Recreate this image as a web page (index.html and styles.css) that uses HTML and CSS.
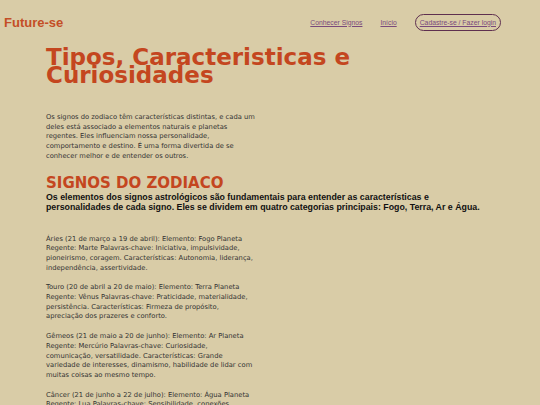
FILE: index.html
```html
<!DOCTYPE html>
<html lang="pt-BR">
<head>
<meta charset="utf-8">
<title>Future-se</title>
<link rel="stylesheet" href="styles.css">
</head>
<body>
<header class="topbar">
  <div class="brand">Future-se</div>
  <nav class="nav">
    <a href="#" class="nav-link">Conhecer Signos</a>
    <a href="#" class="nav-link">Início</a>
    <a href="#" class="nav-link nav-btn">Cadastre-se / Fazer login</a>
  </nav>
</header>
<main class="content">
  <h1 class="title">Tipos, Caracteristicas e Curiosidades</h1>
  <p class="intro">Os signos do zodiaco têm características distintas, e cada um deles está associado a elementos naturais e planetas regentes. Eles influenciam nossa personalidade, comportamento e destino. É uma forma divertida de se conhecer melhor e de entender os outros.</p>
  <h2 class="section-title">SIGNOS DO ZODIACO</h2>
  <p class="lead">Os elementos dos signos astrológicos são fundamentais para entender as características e personalidades de cada signo. Eles se dividem em quatro categorias principais: Fogo, Terra, Ar e Água.</p>
  <div class="signs">
    <p class="sign">Áries (21 de março a 19 de abril): Elemento: Fogo Planeta Regente: Marte Palavras-chave: Iniciativa, impulsividade, pioneirismo, coragem. Características: Autonomia, liderança, independência, assertividade.</p>
    <p class="sign">Touro (20 de abril a 20 de maio): Elemento: Terra Planeta Regente: Vênus Palavras-chave: Praticidade, materialidade, persistência. Características: Firmeza de propósito, apreciação dos prazeres e conforto.</p>
    <p class="sign">Gêmeos (21 de maio a 20 de junho): Elemento: Ar Planeta Regente: Mercúrio Palavras-chave: Curiosidade, comunicação, versatilidade. Características: Grande variedade de interesses, dinamismo, habilidade de lidar com muitas coisas ao mesmo tempo.</p>
    <p class="sign">Câncer (21 de junho a 22 de julho): Elemento: Água Planeta Regente: Lua Palavras-chave: Sensibilidade, conexões emocionais, proteção. Características: Intuição, empatia, apego ao lar e à família.</p>
  </div>
</main>
</body>
</html>
```
FILE: styles.css
```css
html, body {
  margin: 0;
  padding: 0;
  background: #d9cca7;
}
body {
  font-family: "DejaVu Sans", Verdana, sans-serif;
  color: #333;
}
.topbar {
  display: flex;
  align-items: center;
  justify-content: space-between;
  padding: 13px 39px 0 4px;
  height: 18px;
}
.brand {
  font-family: "Liberation Sans", Arial, sans-serif;
  font-weight: bold;
  font-size: 13px;
  color: #c44e26;
}
.nav {
  display: flex;
  align-items: center;
  gap: 18px;
}
.nav-link {
  font-family: "Liberation Sans", Arial, sans-serif;
  font-size: 6.8px;
  color: #7a4a7c;
  text-decoration: underline;
}
.nav-btn {
  border: 1.5px solid #5e2f4f;
  border-radius: 10px;
  padding: 4px 4px;
  line-height: 7px;
}
.content {
  padding: 0 46px;
}
.title {
  font-family: "DejaVu Sans", Verdana, sans-serif;
  font-weight: bold;
  font-size: 23px;
  line-height: 18px;
  color: #c4461f;
  margin: 17px 0 0;
  max-width: 330px;
}
.intro {
  font-size: 6.75px;
  line-height: 9.7px;
  width: 212px;
  margin: 29px 0 0;
}
.section-title {
  font-family: "DejaVu Sans", Verdana, sans-serif;
  font-weight: bold;
  font-size: 15px;
  line-height: 18px;
  color: #c4461f;
  margin: 12px 0 0;
}
.lead {
  font-family: "Liberation Sans", Arial, sans-serif;
  font-weight: bold;
  font-size: 8.8px;
  line-height: 10.5px;
  color: #111;
  margin: 0;
  max-width: 443px;
}
.signs {
  display: flex;
  flex-direction: column;
  gap: 10px;
  margin-top: 22px;
}
.sign {
  font-size: 6.75px;
  line-height: 9.7px;
  width: 209px;
  margin: 0;
}
```
